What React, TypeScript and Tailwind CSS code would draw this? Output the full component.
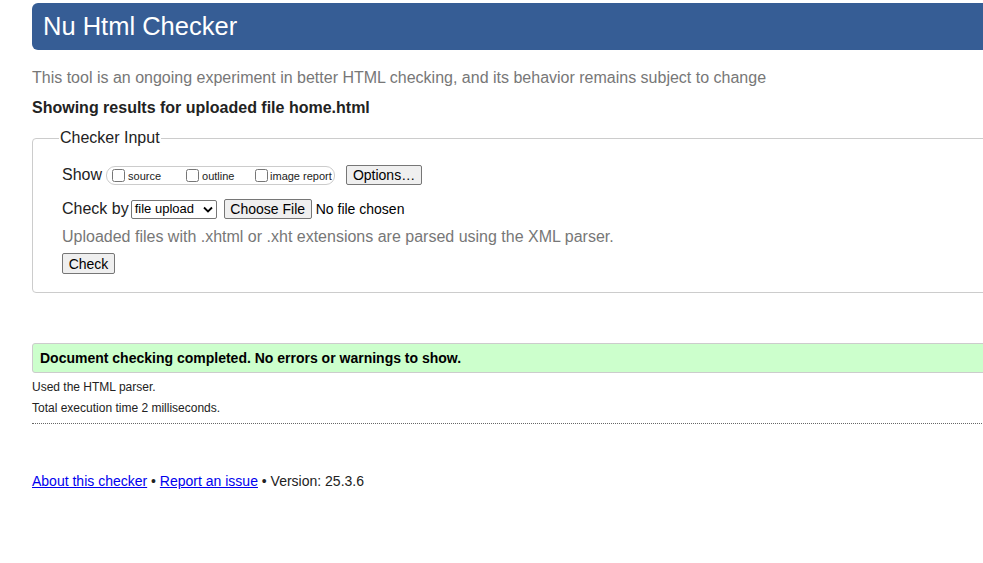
export default function App() {
  return (
    <div className="min-h-screen w-full overflow-hidden bg-white font-['Liberation_Sans',Arial,sans-serif] text-[#222]">
      <div className="ml-[32px] w-[1000px] pt-[3px]">
        {/* Header */}
        <h1 className="flex h-[47px] items-center rounded-l-[6px] bg-[#365d95] pl-[11px] text-[25.5px] leading-none text-white">
          Nu Html Checker
        </h1>

        <p className="mt-[18px] text-[16px] leading-[20px] text-[#777]">
          This tool is an ongoing experiment in better HTML checking, and its behavior remains subject to change
        </p>
        <p className="mt-[10px] text-[16px] font-bold leading-[20px] text-[#222]">
          Showing results for uploaded file home.html
        </p>

        {/* Checker input */}
        <fieldset className="mt-[11px] h-[164px] rounded-[4px] border border-[#ccc] pl-[29px] pt-[18px]">
          <legend className="-ml-[3px] px-[1px] text-[16px] leading-[18px] text-[#222]">Checker Input</legend>

          <div className="flex h-[20px] items-center">
            <span className="text-[16px] text-[#222]">Show</span>
            <div className="ml-[4px] flex h-[19px] w-[229px] items-center rounded-[9px] border border-[#ccc] pl-[5px]">
              <label className="flex w-[74px] items-center text-[11px] text-[#222]">
                <input type="checkbox" className="m-0 mr-[3px] h-[13px] w-[13px]" />
                <span className="mt-[2px]">source</span>
              </label>
              <label className="flex w-[69px] items-center text-[11px] text-[#222]">
                <input type="checkbox" className="m-0 mr-[3px] h-[13px] w-[13px]" />
                <span className="mt-[2px]">outline</span>
              </label>
              <label className="flex items-center text-[11px] text-[#222]">
                <input type="checkbox" className="m-0 mr-[2px] h-[13px] w-[13px]" />
                <span className="mt-[2px]">image report</span>
              </label>
            </div>
            <button className="ml-[11px] h-[20px] w-[76px] rounded-[2px] border border-[#767676] bg-[#efefef] text-[14px] leading-none text-black">
              Options…
            </button>
          </div>

          <div className="mt-[14px] flex h-[20px] items-center">
            <span className="text-[16px] text-[#222]">Check by</span>
            <div className="ml-[2px] flex h-[19px] w-[86px] items-center justify-between rounded-[2px] border border-[#767676] bg-white pl-[3px] pr-[3px] text-[13px] text-black">
              <span>file upload</span>
              <svg width="10" height="7" viewBox="0 0 10 7" fill="none">
                <path d="M1 1.5l4 4 4-4" stroke="#000" strokeWidth="1.8" />
              </svg>
            </div>
            <button className="ml-[7px] h-[20px] w-[88px] rounded-[2px] border border-[#767676] bg-[#efefef] text-[14px] leading-none text-black">
              Choose File
            </button>
            <span className="ml-[4px] text-[14px] text-black">No file chosen</span>
          </div>

          <p className="mt-[8px] text-[16px] leading-[20px] text-[#777]">
            Uploaded files with .xhtml or .xht extensions are parsed using the XML parser.
          </p>

          <button className="mt-[6px] h-[21px] w-[53px] rounded-[2px] border border-[#767676] bg-[#efefef] text-[14px] leading-none text-black">
            Check
          </button>
        </fieldset>

        {/* Result */}
        <div className="mt-[50px] flex h-[30px] items-center rounded-l-[3px] border border-[#ccc] bg-[#ccffcc] pl-[7px] text-[14px] font-bold text-black">
          Document checking completed. No errors or warnings to show.
        </div>
        <p className="mt-[7px] text-[12px] leading-[14px] text-[#222]">Used the HTML parser.</p>
        <p className="mt-[7px] text-[12px] leading-[14px] text-[#222]">Total execution time 2 milliseconds.</p>
        <div className="mt-[8px] border-t border-dotted border-[#666]" />

        {/* Footer */}
        <p className="mt-[49px] text-[14px] leading-[16px] text-[#222]">
          <a href="#" className="text-[#0000ee] underline">About this checker</a>
          {' • '}
          <a href="#" className="text-[#0000ee] underline">Report an issue</a>
          {' • Version: 25.3.6'}
        </p>
      </div>
    </div>
  );
}
